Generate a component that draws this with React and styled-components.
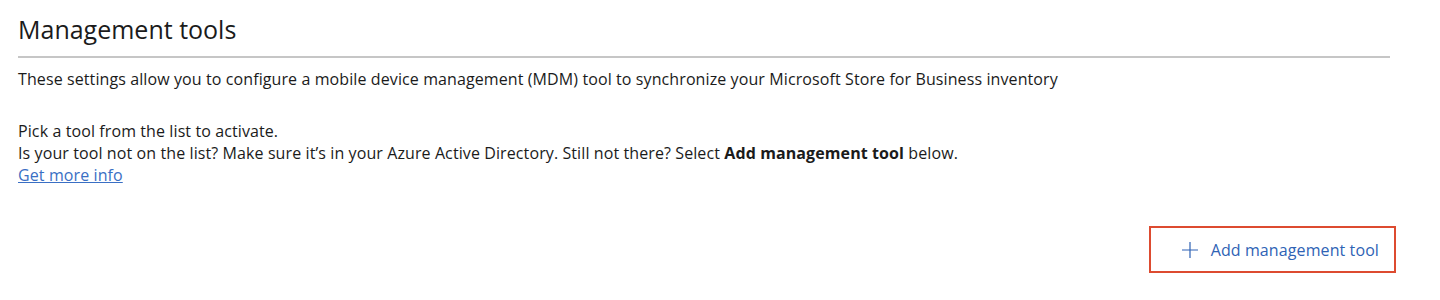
import React from 'react';
import styled, { createGlobalStyle } from 'styled-components';

const GlobalStyle = createGlobalStyle`
  body {
    margin: 0;
    background: #fff;
    font-family: "Open Sans", "Noto Sans", sans-serif;
    color: #1b1b1b;
  }
`;

const Page = styled.div`
  width: 1372px;
  padding: 12px 0 0 18px;
`;

const Title = styled.h2`
  margin: 0;
  font-size: 25px;
  font-weight: 400;
  line-height: 34px;
  padding-bottom: 10px;
  border-bottom: 2px solid #c6c6c6;
`;

const Text = styled.p`
  margin: ${(p) => p.$top || 0}px 0 0;
  font-size: 16px;
  letter-spacing: 0.1px;
  line-height: 22px;
`;

const Link = styled.a`
  color: #3a6fc4;
  text-decoration: underline;
`;

const Actions = styled.div`
  display: flex;
  justify-content: flex-end;
  margin: 40px -6px 0 0;
`;

const AddButton = styled.button`
  display: flex;
  align-items: center;
  gap: 12px;
  height: 47px;
  padding: 0 15px 0 30px;
  background: #fff;
  border: 2px solid #dd4b30;
  font-family: inherit;
  font-size: 16px;
  letter-spacing: 0.1px;
  color: #2f63b5;
  cursor: pointer;

  svg {
    width: 18px;
    height: 18px;
  }
`;

const App = () => (
  <>
    <GlobalStyle />
    <Page>
      <Title>Management tools</Title>
      <Text $top={10}>
        These settings allow you to configure a mobile device management (MDM) tool to synchronize your Microsoft Store for Business inventory
      </Text>
      <Text $top={30}>
        Pick a tool from the list to activate.
        <br />
        Is your tool not on the list? Make sure it’s in your Azure Active Directory. Still not there? Select <b>Add management tool</b> below.
        <br />
        <Link href="#">Get more info</Link>
      </Text>
      <Actions>
        <AddButton>
          <svg viewBox="0 0 18 18">
            <path d="M9 1v16M1 9h16" stroke="currentColor" strokeWidth="1.2" fill="none" />
          </svg>
          Add management tool
        </AddButton>
      </Actions>
    </Page>
  </>
);

export default App;
